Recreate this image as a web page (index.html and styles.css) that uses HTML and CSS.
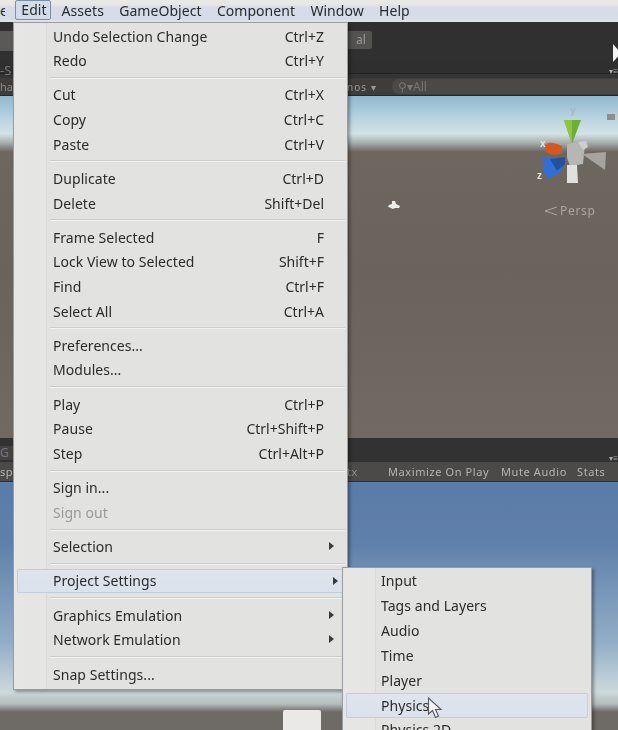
FILE: index.html
```html
<!DOCTYPE html>
<html>
<head>
    <title>Unity Edit Menu</title>
    <link rel="stylesheet" href="styles.css">
</head>
<body>
    <div class="editor">
        <div class="menubar">
            <span class="top-item file">e</span>
            <span class="top-item edit">Edit</span>
            <span class="top-item">Assets</span>
            <span class="top-item">GameObject</span>
            <span class="top-item">Component</span>
            <span class="top-item">Window</span>
            <span class="top-item">Help</span>
        </div>

        <div class="toolbar">
            <div class="hand-button"></div>
            <div class="tool-button">al</div>
        </div>
        <div class="tabs"><span class="tab-label">-S</span><span class="tab-mark">▾≡</span></div>
        <div class="scene-bar">
            <span class="scene-label">ha</span>
            <span class="gizmos">nos ▾</span>
            <span class="search">⚲▾All</span>
        </div>

        <div class="scene">
            <div class="sky"></div>
            <div class="ground">
                <span class="persp">
                    <svg class="persp-cone" width="13" height="10" viewBox="0 0 13 10">
                        <path d="M13 1 L1 5 L13 9" fill="none" stroke="#a9a5a0" stroke-width="1"/>
                    </svg>
                    Persp
                </span>
            </div>
        </div>

        <div class="game-tabs"><span class="tab-label game-tab">G</span><span class="tab-mark">▾≡</span></div>
        <div class="game-bar">
            <span class="scene-label">sp</span>
            <span class="game-label">tx</span>
            <span class="game-option maximize">Maximize On Play</span>
            <span class="game-option mute">Mute Audio</span>
            <span class="game-option">Stats</span>
        </div>
        <div class="game"></div>
    </div>

    <svg class="gizmo" width="84" height="88" viewBox="0 -8 84 88">
        <text x="36" y="0" class="axis faint">y</text>
        <path d="M30 6 L47 6 L38 30 Z" fill="#6fae35"/>
        <path d="M30 6 L38 6 L38 30 Z" fill="#8dc63f"/>
        <path d="M33 30 L49 27 L51 31 L49 50 L36 52 L33 44 Z" fill="#b6b6b3"/>
        <path d="M44 28 L52 27 L54 33 L49 36 Z" fill="#cfcfcb"/>
        <path d="M48 40 L72 38 L71 56 Z" fill="#a5a5a0"/>
        <path d="M33 51 L43 51 L44 69 L33 69 Z" fill="#e0e0dc"/>
        <path d="M11 31 C14 27 22 29 28 32 L28 39 C22 42 13 41 11 36 Z" fill="#d9571f"/>
        <path d="M10 47 L7 44 L31 43 L31 50 L24 60 L15 64 L9 58 Z" fill="#2f6fd8"/>
        <path d="M16 45 L31 43 L31 50 L23 57 Z" fill="#24509c"/>
        <text x="6" y="33" class="axis">x</text>
        <text x="3" y="65" class="axis">z</text>
        <rect x="73" y="0" width="8" height="6" fill="#8e8f8d"/>
    </svg>

    <svg class="arrow" width="5" height="20" viewBox="0 0 5 20">
        <path d="M0 0 L8 9 L0 18 Z" fill="#f4f4f4"/>
    </svg>

    <svg class="blob" width="14" height="10" viewBox="0 0 14 10">
        <path d="M5 1 L8 1 L9 4 L13 6 L12 8 L8 8 L6 9 L4 8 L1 7 L2 5 L5 4 Z" fill="#efefea"/>
    </svg>
    <div class="white-box"></div>

    <div class="menu edit-menu">
        <div class="row"><span>Undo Selection Change</span><span class="keys">Ctrl+Z</span></div>
        <div class="row"><span>Redo</span><span class="keys">Ctrl+Y</span></div>
        <div class="sep"></div>
        <div class="row"><span>Cut</span><span class="keys">Ctrl+X</span></div>
        <div class="row"><span>Copy</span><span class="keys">Ctrl+C</span></div>
        <div class="row"><span>Paste</span><span class="keys">Ctrl+V</span></div>
        <div class="sep"></div>
        <div class="row"><span>Duplicate</span><span class="keys">Ctrl+D</span></div>
        <div class="row"><span>Delete</span><span class="keys">Shift+Del</span></div>
        <div class="sep"></div>
        <div class="row"><span>Frame Selected</span><span class="keys">F</span></div>
        <div class="row"><span>Lock View to Selected</span><span class="keys">Shift+F</span></div>
        <div class="row"><span>Find</span><span class="keys">Ctrl+F</span></div>
        <div class="row"><span>Select All</span><span class="keys">Ctrl+A</span></div>
        <div class="sep"></div>
        <div class="row"><span>Preferences...</span></div>
        <div class="row"><span>Modules...</span></div>
        <div class="sep"></div>
        <div class="row"><span>Play</span><span class="keys">Ctrl+P</span></div>
        <div class="row"><span>Pause</span><span class="keys">Ctrl+Shift+P</span></div>
        <div class="row"><span>Step</span><span class="keys">Ctrl+Alt+P</span></div>
        <div class="sep"></div>
        <div class="row"><span>Sign in...</span></div>
        <div class="row disabled"><span>Sign out</span></div>
        <div class="sep"></div>
        <div class="row sub"><span>Selection</span></div>
        <div class="sep"></div>
        <div class="row sub active"><span>Project Settings</span></div>
        <div class="sep"></div>
        <div class="row sub"><span>Graphics Emulation</span></div>
        <div class="row sub"><span>Network Emulation</span></div>
        <div class="sep"></div>
        <div class="row"><span>Snap Settings...</span></div>
    </div>

    <div class="menu settings-menu">
        <div class="row"><span>Input</span></div>
        <div class="row"><span>Tags and Layers</span></div>
        <div class="row"><span>Audio</span></div>
        <div class="row"><span>Time</span></div>
        <div class="row"><span>Player</span></div>
        <div class="row active"><span>Physics</span></div>
        <div class="row"><span>Physics 2D</span></div>
    </div>

    <svg class="cursor" width="18" height="24" viewBox="0 0 18 24">
        <path d="M1.5 1 L1.5 17 L5.5 13.5 L8.5 20.5 L11.5 19 L8.5 12.5 L14 12.5 Z" fill="#f2f2f2" stroke="#55585e" stroke-width="1.1"/>
    </svg>
</body>
</html>
```

FILE: styles.css
```css
html, body {
    margin: 0;
    height: 730px;
    overflow: hidden;
}

body {
    position: relative;
    font-family: "Noto Sans", sans-serif;
    font-size: 14px;
    color: #2b2b2b;
    background-color: #333333;
    filter: blur(0.4px);
}

.editor {
    display: flex;
    flex-direction: column;
    height: 730px;
}

.menubar {
    display: flex;
    align-items: center;
    gap: 15.3px;
    height: 20px;
    flex-shrink: 0;
    background: linear-gradient(#e9e9e6 0, #e6e6e4 5px, #d8dce8 7px, #d6dbe6 100%);
    border-bottom: 2px solid #dfe3ea;
    letter-spacing: 0.05px;
}

.top-item {
    white-space: nowrap;
}

.file {
    width: 5px;
    overflow: hidden;
}

.edit {
    width: 24px;
    padding: 0 5px;
    margin-left: -5px;
    margin-right: -5px;
    height: 18px;
    line-height: 18px;
    background-color: #d3dce8;
    border: 1px solid #7d8fa3;
    border-radius: 2px;
}

.toolbar {
    display: flex;
    justify-content: space-between;
    height: 40px;
    flex-shrink: 0;
    padding: 9px 246px 0 0;
    background-color: #313030;
    box-sizing: border-box;
}

.hand-button {
    width: 14px;
    height: 20px;
    background-color: #5a5958;
}

.tool-button {
    width: 30px;
    height: 18px;
    background-color: #53524f;
    border-radius: 2px;
    color: #9a9a98;
    font-size: 12px;
    line-height: 18px;
    padding-left: 14px;
    box-sizing: border-box;
}

.tabs {
    height: 16px;
    flex-shrink: 0;
    background: linear-gradient(#302f2f 0, #302f2f 11px, #232222 11px, #232222 12px, #353434 12px);
    position: relative;
    color: #77777a;
    font-size: 13px;
    line-height: 16px;
}

.tab-mark {
    position: absolute;
    right: 0;
    top: 4px;
    font-size: 8px;
    line-height: 10px;
    color: #aaaaaa;
}

.tab-label {
    color: #77777a;
}

.scene-bar {
    display: flex;
    align-items: center;
    height: 17px;
    flex-shrink: 0;
    background-color: #3e3d3c;
    color: #8a8a88;
    font-size: 11px;
    border-bottom: 1px solid #23262b;
}

.scene-label {
    width: 347px;
    flex-shrink: 0;
}

.gizmos {
    width: 45px;
    font-size: 10px;
    letter-spacing: 1px;
    color: #9a9a98;
}

.search {
    width: 226px;
    height: 15px;
    line-height: 15px;
    background-color: #4a4948;
    border-radius: 7px 0 0 7px;
    padding-left: 6px;
    box-sizing: border-box;
    color: #77777a;
    font-size: 12px;
}

.scene {
    display: flex;
    flex-direction: column;
    height: 342px;
    flex-shrink: 0;
}

.sky {
    height: 56px;
    flex-shrink: 0;
    background: linear-gradient(#8fb8d2 0, #b9d3e0 22px, #d3e2e5 38px, #a3adac 47px, #6d665f 56px);
}

.ground {
    flex: 1;
    position: relative;
    background: linear-gradient(#6e675f, #6a635c 120px, #716a62);
}

.persp {
    position: absolute;
    left: 544px;
    top: 50px;
    display: flex;
    align-items: center;
    gap: 3px;
    font-size: 12px;
    letter-spacing: 0.7px;
    color: #a9a5a0;
}

.game-tabs {
    height: 24px;
    flex-shrink: 0;
    background-color: #333232;
    position: relative;
    font-size: 12px;
}

.game-tab {
    display: block;
    width: 14px;
    height: 14px;
    margin-top: 8px;
    background-color: #444342;
    line-height: 14px;
}

.game-tabs .tab-mark {
    top: 15px;
}

.game-bar {
    display: flex;
    align-items: center;
    height: 19px;
    flex-shrink: 0;
    background-color: #4b4a49;
    border-bottom: 1px solid #2a3242;
    color: #b4b4b2;
    font-size: 11px;
    letter-spacing: 0.6px;
    white-space: nowrap;
}

.game-label {
    width: 41px;
    flex-shrink: 0;
    color: #8f8f8d;
}

.game-option {
    flex-shrink: 0;
}

.maximize {
    width: 113px;
}

.mute {
    width: 76px;
}

.game {
    flex: 1;
    background: linear-gradient(#5b7ba8 0, #5f80aa 60px, #92adc6 160px, #ccd9dc 210px, #b4bcbb 222px, #6e6a66 230px);
}

.gizmo {
    position: absolute;
    left: 534px;
    top: 106px;
}

.axis {
    font-family: "Liberation Sans", sans-serif;
    font-size: 10px;
    font-weight: bold;
    fill: #e4e4e4;
}

.faint {
    fill: #9fb9c7;
}

.arrow {
    position: absolute;
    left: 613px;
    top: 44px;
}

.blob {
    position: absolute;
    left: 387px;
    top: 200px;
}

.white-box {
    position: absolute;
    left: 283px;
    top: 710px;
    width: 38px;
    height: 20px;
    background-color: #eae9e8;
    border-radius: 2px 2px 0 0;
}

.menu {
    position: absolute;
    box-sizing: border-box;
    background: linear-gradient(90deg, #e6e6e5 0, #e5e5e4 32px, #dadad9 32px, #dadad9 33px, #e2e2e1 33px);
    border: 1px solid #9a9c9f;
    box-shadow: 2px 2px 3px rgba(0, 0, 0, 0.35);
    letter-spacing: 0.05px;
}

.edit-menu {
    left: 13px;
    top: 22px;
    width: 335px;
    height: 668px;
    padding: 0.8px 2px 0;
}

.settings-menu {
    left: 342px;
    top: 567px;
    width: 250px;
    height: 180px;
    padding: 0.5px 2px 0;
    z-index: 2;
}

.row {
    display: flex;
    justify-content: space-between;
    align-items: center;
    height: 24.6px;
    padding: 0 21px 0 37px;
    white-space: nowrap;
}

.settings-menu .row {
    height: 24.85px;
    padding-left: 36px;
}

.keys {
    letter-spacing: 0;
}

.disabled {
    color: #9a9a9a;
}

.sub {
    position: relative;
}

.sub::after {
    content: "";
    position: absolute;
    right: 11px;
    top: 8px;
    border-left: 5px solid #3a3a3a;
    border-top: 4px solid transparent;
    border-bottom: 4px solid transparent;
}

.active {
    margin: 0 1px;
    padding-left: 36px;
    padding-right: 20px;
    box-sizing: border-box;
    background: linear-gradient(#dfe4ec, #dbe2ec);
    box-shadow: inset 0 0 0 1px #c3cedb;
    border-radius: 2px;
}

.edit-menu .active {
    margin-right: -4px;
}

.settings-menu .active {
    padding-left: 35px;
}

.sep {
    height: 9.7px;
    margin-left: 34px;
    background: linear-gradient(transparent 4px, #cdcdcc 4px, #cdcdcc 5px, #f3f3f3 5px, #f3f3f3 6px, transparent 6px);
}

.cursor {
    position: absolute;
    left: 427px;
    top: 697px;
    z-index: 3;
}
```
